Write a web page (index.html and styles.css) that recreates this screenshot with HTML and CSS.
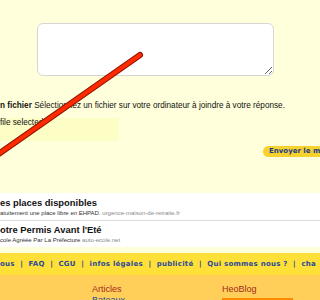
FILE: index.html
```html
<!DOCTYPE html>
<html lang="fr">
<head>
  <meta charset="UTF-8" />
  <title>Répondre</title>
  <link rel="stylesheet" href="styles.css">
</head>
<body>
  <div class="reply">
    <textarea class="message"></textarea>
    <p class="attach"><b>n fichier</b> Sélectionnez un fichier sur votre ordinateur à joindre à votre réponse.</p>
    <div class="file-box">file selected</div>
    <div class="send-row">
      <button class="send">Envoyer le m</button>
    </div>
  </div>

  <div class="ads">
    <div class="ad">
      <div class="ad-title">es places disponibles</div>
      <div class="ad-text">atuitement une place libre en EHPAD. <span class="ad-url">urgence-maison-de-retraite.fr</span></div>
    </div>
    <div class="ad">
      <div class="ad-title">otre Permis Avant l'Eté</div>
      <div class="ad-text">cole Agréée Par La Préfecture <span class="ad-url">auto-ecole.net</span></div>
    </div>
  </div>

  <div class="nav">
    <a>ous</a><span class="sep">|</span><a>FAQ</a><span class="sep">|</span><a>CGU</a><span class="sep">|</span><a>infos légales</a><span class="sep">|</span><a>publicité</a><span class="sep">|</span><a>Qui sommes nous ?</a><span class="sep">|</span><a>cha</a>
  </div>

  <div class="footer">
    <div class="col col-articles">
      <h4>Articles</h4>
      <a>Bateaux</a>
    </div>
    <div class="col col-blog">
      <h4>HeoBlog</h4>
      <div class="blog-badge"><span>heoBlog</span></div>
    </div>
  </div>

  <!-- trait rouge par-dessus -->
  <svg class="scribble" width="320" height="300" viewBox="0 0 320 300">
    <line x1="140" y1="55" x2="-10" y2="160" stroke="#8a1200" stroke-width="6" stroke-linecap="round" />
    <line x1="140" y1="55" x2="-10" y2="160" stroke="#ff2a00" stroke-width="4" stroke-linecap="round" />
  </svg>
</body>
</html>
```

FILE: styles.css
```css
html, body {
  margin: 0; padding: 0;
  background-color: #ffffdc;
  font-family: "Liberation Sans", Arial, sans-serif;
  height: 300px;
  overflow: hidden;
}
.reply {
  padding-top: 23px;
  height: 170px;
}
.message {
  display: block;
  margin: 0 0 0 37px;
  width: 237px;
  height: 53px;
  box-sizing: border-box;
  border: 1px solid #d6d6d6;
  border-radius: 6px;
  background: #fff;
  resize: vertical;
}
.attach {
  margin: 25px 0 0;
  font-size: 8.2px;
  line-height: 10px;
  color: #111;
  white-space: nowrap;
}
.file-box {
  margin-top: 7px;
  width: 119px;
  height: 23px;
  background: #fdfdc6;
  font-size: 8.2px;
  line-height: 10px;
  color: #111;
}
.send-row {
  display: flex;
  margin-top: 5px;
  padding-left: 263px;
  white-space: nowrap;
}
.send {
  height: 11px;
  padding: 0 8px 0 6px;
  border: 0;
  border-radius: 6px;
  background: #f6d22e;
  color: #1d3a8c;
  font-family: "DejaVu Sans", Verdana, sans-serif;
  font-weight: bold;
  font-size: 7px;
  line-height: 11px;
  white-space: nowrap;
}
.ads {
  background: #fff;
}
.ad {
  height: 28px;
  padding-top: 3px;
  box-sizing: border-box;
  border-bottom: 1px solid #dcdcdc;
}
.ad:last-child { border-bottom: 0; height: 26px; padding-top: 2px; }
.ad-title {
  font-weight: bold;
  font-size: 9.4px;
  line-height: 13px;
  color: #111;
}
.ad-text {
  font-size: 6px;
  line-height: 9px;
  color: #333;
}
.ad-url { color: #8a8a8a; }
.nav {
  margin-top: 6px;
  height: 22px;
  background: #ffe038;
  font-family: "DejaVu Sans", Verdana, sans-serif;
  font-weight: bold;
  font-size: 7px;
  letter-spacing: 0.25px;
  line-height: 22px;
  color: #2a4a98;
  white-space: nowrap;
}
.nav .sep { margin: 0 5.5px; }
.footer {
  height: 40px;
  background: #ffcf5a;
  display: flex;
  padding-top: 9px;
  box-sizing: border-box;
}
.col h4 {
  margin: 0;
  font-weight: normal;
  font-size: 9px;
  line-height: 11px;
  color: #a32a1e;
}
.col a {
  display: block;
  font-size: 9px;
  line-height: 10px;
  color: #2a4a98;
}
.col-articles { margin-left: 92px; width: 130px; }
.blog-badge {
  margin-top: 3px;
  width: 71px;
  height: 20px;
  box-sizing: border-box;
  border-left: 8px solid #ff8a00;
  border-right: 6px solid #ff8a00;
  border-top: 2px solid #ff8a00;
  background: #fff6d8;
  font-size: 4px;
  color: #999;
  padding-left: 4px;
}
.scribble {
  position: absolute;
  top: 0; left: 0;
  pointer-events: none;
}
```
